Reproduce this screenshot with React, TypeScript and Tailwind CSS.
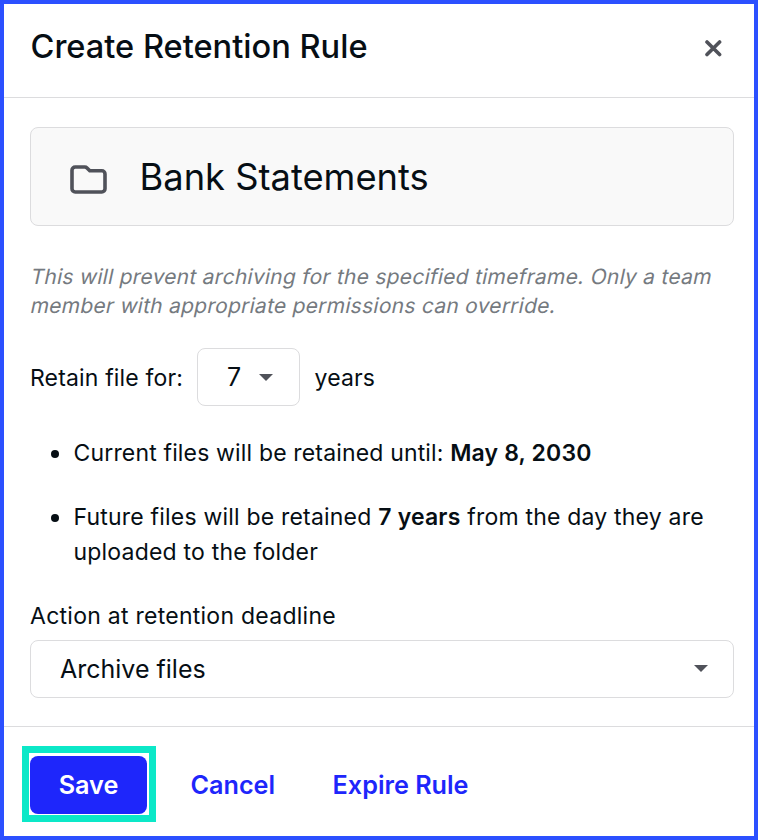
const Caret = () => (
  <svg width="14" height="7" viewBox="0 0 14 7" fill="#50525a">
    <path d="M0 0h14L7 7z" />
  </svg>
);

const App = () => {
  return (
    <div className="flex h-[840px] w-[758px] flex-col border-4 border-[#2b50ff] bg-white font-['Inter',sans-serif] text-[#060e14]">
      <header className="flex h-[94px] shrink-0 items-start justify-between border-b border-[#dcdcde] pt-[21px] pr-[32px] pl-[26.5px]">
        <h1 className="text-[32.6px] leading-[42px] font-medium whitespace-nowrap">
          Create Retention Rule
        </h1>
        <button className="mt-[14px]" aria-label="Close">
          <svg width="18" height="18" viewBox="0 0 18 18" fill="none">
            <path
              d="M3 3l12.6 12.6M15.6 3L3 15.6"
              stroke="#50525a"
              strokeWidth="3.6"
              strokeLinecap="round"
            />
          </svg>
        </button>
      </header>

      <main className="flex h-[629px] shrink-0 flex-col border-b border-[#dcdcde] px-[26px] pt-[29px]">
        <div className="flex h-[99px] w-[704px] shrink-0 items-center rounded-lg border border-[#dcdcde] bg-[#f9f9f9] pl-[39px]">
          <svg width="37" height="29" viewBox="0 0 37 29" fill="none" className="mt-[5px]">
            <path
              d="M5.2 2h9.6c.9 0 1.6.3 2.2.9L19.8 5.8h12a3.2 3.2 0 0 1 3.2 3.2v14.8a3.2 3.2 0 0 1-3.2 3.2H5.2A3.2 3.2 0 0 1 2 23.8V5.2A3.2 3.2 0 0 1 5.2 2z"
              stroke="#50525a"
              strokeWidth="3.6"
            />
          </svg>
          <span className="mt-[2px] ml-[32.5px] text-[36.3px] whitespace-nowrap">Bank Statements</span>
        </div>

        <p className="mt-[36px] pl-px text-[21px] leading-[29px] tracking-[0.26px] whitespace-nowrap text-[#757a80]">
          <span className="block -skew-x-[12deg]">
            This will prevent archiving for the specified timeframe. Only a team
          </span>
          <span className="block -skew-x-[12deg]">
            member with appropriate permissions can override.
          </span>
        </p>

        <div className="mt-[28px] flex items-center text-[23px] tracking-[0.16px]">
          <span className="mt-[2px] w-[153px] whitespace-nowrap">Retain file for:</span>
          <button className="mr-[14.5px] ml-[14px] flex h-[58px] w-[103px] items-center rounded-lg border border-[#dcdcde] pl-[29px] text-[25px]">
            <span className="mt-[2px] mr-[18px]">7</span>
            <Caret />
          </button>
          <span className="mt-[2px]">years</span>
        </div>

        <ul className="mt-[30px] flex flex-col gap-[29px] text-[23px] leading-[35px] tracking-[0.2px] whitespace-nowrap">
          <li className="flex">
            <span className="mt-[14px] mr-[14.5px] ml-[21px] size-2 rounded-full bg-[#060e14]" />
            <p className="tracking-[0.16px]">
              Current files will be retained until: <b className="font-semibold">May 8, 2030</b>
            </p>
          </li>
          <li className="flex">
            <span className="mt-[14px] mr-[14.5px] ml-[21px] size-2 rounded-full bg-[#060e14]" />
            <p>
              Future files will be retained <b className="font-semibold">7 years</b> from the day they are
              <br />
              uploaded to the folder
            </p>
          </li>
        </ul>

        <label className="mt-[29px] text-[23px] leading-[35px] tracking-[0.26px]">
          Action at retention deadline
        </label>
        <button className="mt-[6px] flex h-[58px] w-[704px] shrink-0 items-center justify-between rounded-lg border border-[#dcdcde] pr-[25.5px] pb-px pl-[29px] text-[25px]">
          <span className="mt-[2px]">Archive files</span>
          <Caret />
        </button>
      </main>

      <footer className="flex items-center pt-[19px] pl-[18px] text-[25.2px] font-semibold text-[#1e26fb]">
        <div className="border-[7px] border-[#0ce8c8] pt-[3px] pr-[2px] pb-px pl-px">
          <button className="block h-[58px] w-[117px] rounded-lg bg-[#1e26fb] pt-[2px] text-white">Save</button>
        </div>
        <button className="mt-[4px] ml-[34.5px]">Cancel</button>
        <button className="mt-[4px] ml-[57.5px] whitespace-nowrap">Expire Rule</button>
      </footer>
    </div>
  );
};

export default App;
